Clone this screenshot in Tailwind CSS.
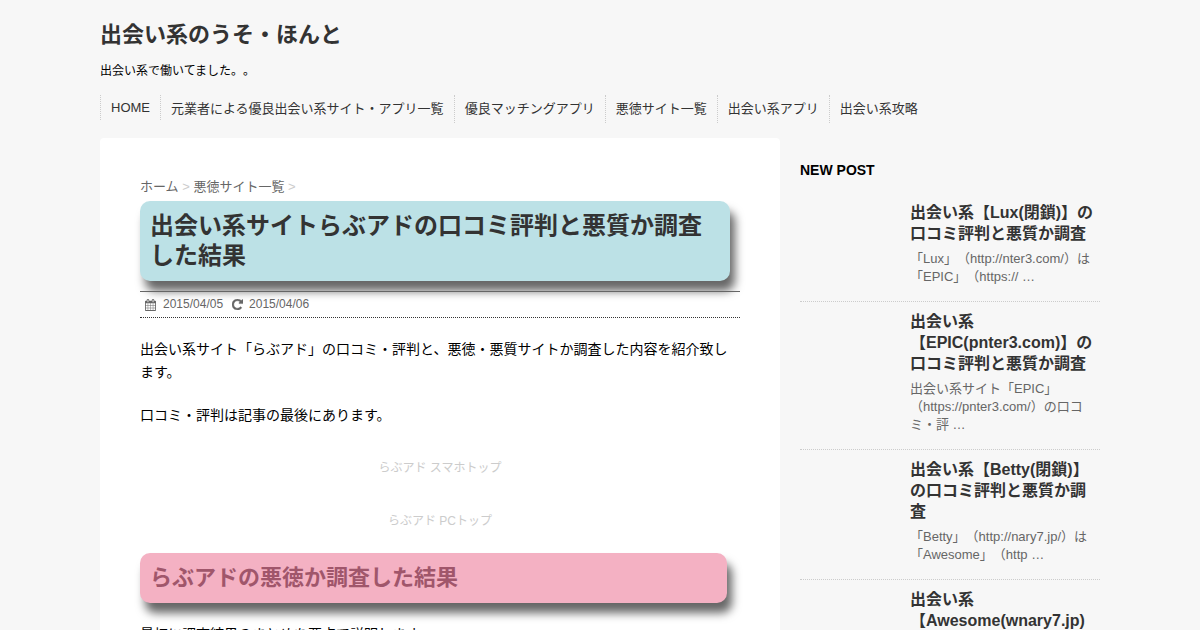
<!DOCTYPE html>
<html lang="ja">
<head>
<meta charset="utf-8">
<meta name="viewport" content="width=device-width, initial-scale=1">
<title>出会い系のうそ・ほんと</title>
<script src="https://cdn.jsdelivr.net/npm/@tailwindcss/browser@4"></script>
</head>
<body class="bg-[#f7f7f7] font-['Liberation_Sans','Noto_Sans_CJK_JP',sans-serif] text-sm wrap-break-word text-black [text-spacing-trim:space-all]">
<div class="mx-auto max-w-[1000px]">
  <header>
    <p class="pt-[21px] text-[22px] leading-7 font-bold text-[#333]"><a href="#">出会い系のうそ・ほんと</a></p>
    <p class="mt-3 text-xs leading-5">出会い系で働いてました。。</p>
    <nav class="mt-[14px]">
      <ul class="flex flex-wrap items-start text-[13px] leading-[25px] text-[#333]">
        <li class="border-x border-dotted border-[#ccc] px-[10px]"><a href="#">HOME</a></li>
        <li class="border-r border-dotted border-[#ccc] px-[10px] leading-7"><a href="#">元業者による優良出会い系サイト・アプリ一覧</a></li>
        <li class="border-r border-dotted border-[#ccc] px-[10px] leading-7"><a href="#">優良マッチングアプリ</a></li>
        <li class="border-r border-dotted border-[#ccc] px-[10px] leading-7"><a href="#">悪徳サイト一覧</a></li>
        <li class="border-r border-dotted border-[#ccc] px-[10px] leading-7"><a href="#">出会い系アプリ</a></li>
        <li class="px-[10px] leading-7"><a href="#">出会い系攻略</a></li>
      </ul>
    </nav>
  </header>
  <div class="mt-[15px] flex items-start gap-5">
    <main class="min-w-0 flex-1 rounded bg-white px-10 pt-9 pb-10">
      <nav class="mb-[2px] text-[13px] leading-[25px] text-[#ccc]">
        <a href="#" class="text-[#666]">ホーム</a> &gt; <a href="#" class="text-[#666]">悪徳サイト一覧</a> &gt;
      </nav>
      <article>
        <h1 class="mr-[10px] rounded-[10px] bg-[#bce1e6] p-[10px] text-2xl leading-[30px] font-bold text-[#333] shadow-[5px_10px_10px_rgba(0,0,0,0.6)]">出会い系サイトらぶアドの口コミ評判と悪質か調査した結果</h1>
        <div class="mt-[10px] flex items-center gap-[9px] border-t border-b border-t-[#666] border-b-[#333] px-[5px] text-xs leading-[25px] text-[#666] [border-bottom-style:dotted]">
          <span class="flex items-center gap-[7px]"><svg class="h-3 w-[11px]" viewBox="0 0 1664 1792" fill="currentColor" aria-hidden="true"><path d="M128 1664h288v-288H128v288zm352 0h320v-288H480v288zm-352-352h288V992H128v320zm352 0h320V992H480v320zM128 928h288V640H128v288zm736 736h320v-288H864v288zM480 928h320V640H480v288zm768 736h288v-288h-288v288zM864 1312h320V992H864v320zM512 448V160q0-13-9.500-22.500T480 128h-64q-13 0-22.500 9.500T384 160v288q0 13 9.500 22.500T416 480h64q13 0 22.500-9.500T512 448zm736 864h288V992h-288v320zM864 928h320V640H864v288zm384 0h288V640h-288v288zm32-480V160q0-13-9.500-22.500T1248 128h-64q-13 0-22.500 9.500T1152 160v288q0 13 9.500 22.500t22.500 9.500h64q13 0 22.500-9.500t9.500-22.500zm384-64v1280q0 52-38 90t-90 38H128q-52 0-90-38t-38-90V384q0-52 38-90t90-38h128v-96q0-66 47-113T416 0h64q66 0 113 47t47 113v96h384v-96q0-66 47-113t113-47h64q66 0 113 47t47 113v96h128q52 0 90 38t38 90z"/></svg><time>2015/04/05</time></span>
          <span class="flex items-center gap-[6px]"><svg class="size-[11px]" viewBox="0 0 1536 1536" fill="currentColor" stroke="currentColor" stroke-width="60" aria-hidden="true"><path d="M1536 128v448q0 26-19 45t-45 19h-448q-42 0-59-40-17-39 14-69l138-138Q969 256 768 256q-104 0-198.500 40.500T406 406 296.500 569.500 256 768t40.500 198.500T406 1130t163.500 109.500T768 1280q119 0 225-52t179-147q7-10 23-12 15 0 25 9l137 138q9 8 9.500 20.500t-7.500 22.500q-109 132-264 204.500T768 1536q-156 0-298-61t-245-164-164-245T0 768t61-298 164-245T470 61 768 0q147 0 284.500 55.500T1297 212l130-129q29-31 70-14 39 17 39 59z"/></svg><time>2015/04/06</time></span>
        </div>
        <p class="mt-5 leading-[23px]">出会い系サイト「らぶアド」の口コミ・評判と、悪徳・悪質サイトか調査した内容を紹介致します。</p>
        <p class="mt-5 leading-[23px]">口コミ・評判は記事の最後にあります。</p>
        <p class="mt-[30px] text-center text-xs leading-[23px] text-[#ccc]">らぶアド スマホトップ</p>
        <p class="mt-[30px] text-center text-xs leading-[23px] text-[#ccc]">らぶアド PCトップ</p>
        <h2 class="mt-5 mr-[13px] rounded-[10px] bg-[#f4b1c3] p-[10px] text-[22px] leading-[30px] font-bold text-[#a0566b] shadow-[5px_10px_10px_rgba(0,0,0,0.6)]">らぶアドの悪徳か調査した結果</h2>
        <p class="mt-5 leading-[23px]">最初に調査結果のまとめを要点で説明します。</p>
      </article>
    </main>
    <aside class="w-[300px] shrink-0 pt-5">
      <h2 class="leading-6 font-bold">NEW POST</h2>
      <ul class="mt-5 flex flex-col gap-[9px]">
        <li class="border-b border-dotted border-[#ccc] pb-[15px] pl-[110px]">
          <h3 class="text-base leading-[21px] font-bold text-[#333]"><a href="#">出会い系【Lux(閉鎖)】の口コミ評判と悪質か調査</a></h3>
          <p class="mt-[6px] text-[13px] leading-[18px] text-[#666]">「Lux」（http://nter3.com/）は「EPIC」（https:// …</p>
        </li>
        <li class="border-b border-dotted border-[#ccc] pb-[15px] pl-[110px]">
          <h3 class="text-base leading-[21px] font-bold text-[#333]"><a href="#">出会い系【EPIC(pnter3.com)】の口コミ評判と悪質か調査</a></h3>
          <p class="mt-[6px] text-[13px] leading-[18px] text-[#666]">出会い系サイト「EPIC」（https://pnter3.com/）の口コミ・評 …</p>
        </li>
        <li class="border-b border-dotted border-[#ccc] pb-[15px] pl-[110px]">
          <h3 class="text-base leading-[21px] font-bold text-[#333]"><a href="#">出会い系【Betty(閉鎖)】の口コミ評判と悪質か調査</a></h3>
          <p class="mt-[6px] text-[13px] leading-[18px] text-[#666]">「Betty」（http://nary7.jp/）は「Awesome」（http …</p>
        </li>
        <li class="border-b border-dotted border-[#ccc] pb-[15px] pl-[110px]">
          <h3 class="text-base leading-[21px] font-bold text-[#333]"><a href="#">出会い系【Awesome(wnary7.jp)】の口コミ評判と悪質か調査</a></h3>
        </li>
      </ul>
    </aside>
  </div>
</div>
</body>
</html>
